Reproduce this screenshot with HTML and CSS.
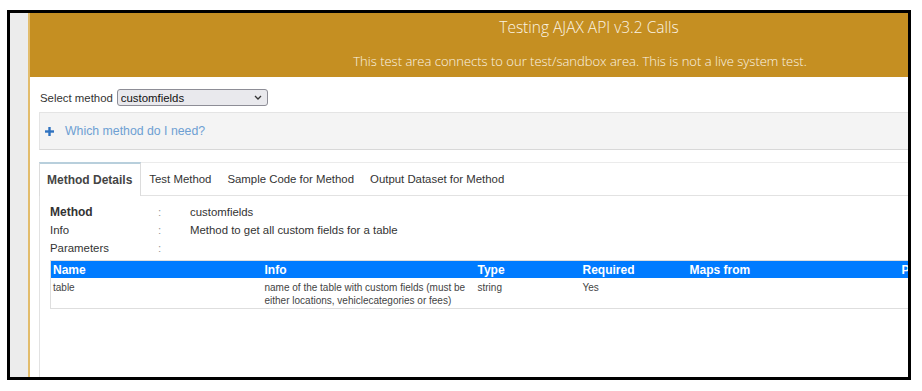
FILE: index.html
```html
<!DOCTYPE html>
<html lang="en">
<head>
    <meta charset="UTF-8">
    <title>Testing AJAX API v3.2 Calls</title>
    <link rel="stylesheet" href="styles.css">
</head>
<body>
    <div class="frame">
        <div class="side-strip"></div>
        <div class="main">
            <header class="banner">
                <h1>Testing AJAX API v3.2 Calls</h1>
                <p>This test area connects to our test/sandbox area. This is not a live system test.</p>
            </header>

            <div class="content">
                <div class="method-select">
                    <label for="method">Select method</label>
                    <div class="select-wrap">
                        <select id="method">
                            <option>customfields</option>
                        </select>
                        <svg class="chevron" width="8" height="5" viewBox="0 0 8 5">
                            <path d="M1 1 L4 4 L7 1" fill="none" stroke="#333" stroke-width="1.3"/>
                        </svg>
                    </div>
                </div>

                <div class="help-panel">
                    <svg class="plus" width="9" height="9" viewBox="0 0 9 9">
                        <rect x="0" y="3.3" width="9" height="2.4" fill="#2f73c0"/>
                        <rect x="3.3" y="0" width="2.4" height="9" fill="#2f73c0"/>
                    </svg>
                    <span>Which method do I need?</span>
                </div>

                <ul class="tabs">
                    <li class="tab active">Method Details</li>
                    <li class="tab">Test Method</li>
                    <li class="tab">Sample Code for Method</li>
                    <li class="tab">Output Dataset for Method</li>
                </ul>

                <div class="tab-pane">
                    <div class="detail-row">
                        <span class="detail-label strong">Method</span>
                        <span class="detail-colon">:</span>
                        <span>customfields</span>
                    </div>
                    <div class="detail-row">
                        <span class="detail-label">Info</span>
                        <span class="detail-colon">:</span>
                        <span>Method to get all custom fields for a table</span>
                    </div>
                    <div class="detail-row">
                        <span class="detail-label">Parameters</span>
                        <span class="detail-colon">:</span>
                        <span></span>
                    </div>

                    <table class="params">
                        <colgroup>
                            <col class="col-name">
                            <col class="col-info">
                            <col class="col-type">
                            <col class="col-req">
                            <col class="col-maps">
                            <col class="col-values">
                        </colgroup>
                        <thead>
                            <tr>
                                <th>Name</th>
                                <th>Info</th>
                                <th>Type</th>
                                <th>Required</th>
                                <th>Maps from</th>
                                <th>Possible values</th>
                            </tr>
                        </thead>
                        <tbody>
                            <tr>
                                <td>table</td>
                                <td>name of the table with custom fields (must be either locations, vehiclecategories or fees)</td>
                                <td>string</td>
                                <td>Yes</td>
                                <td></td>
                                <td></td>
                            </tr>
                        </tbody>
                    </table>
                </div>
            </div>
        </div>
    </div>
</body>
</html>
```

FILE: styles.css
```css
body {
    margin: 0;
    padding: 10px 7px;
    background: #fff;
    font-family: "Liberation Sans", Arial, sans-serif;
    color: #333;
}
.frame {
    display: flex;
    width: 898px;
    height: 364px;
    border: 3px solid #000;
    overflow: hidden;
    background: #fff;
}
.side-strip {
    flex: 0 0 18px;
    background: #ececec;
}
.main {
    flex: 0 0 1118px;
    border-left: 2px solid #e2bc6c;
}
.banner {
    height: 64px;
    box-sizing: border-box;
    background: #c58f22;
    color: #fbf4e4;
    text-align: center;
    font-family: "Open Sans", sans-serif;
    font-weight: 300;
    padding-bottom: 7px;
}
.banner h1 {
    margin: 0;
    font-size: 15.5px;
    font-weight: 300;
    line-height: 28px;
}
.banner p {
    margin: 11px 0 0;
    font-size: 13px;
    line-height: 18px;
    padding-right: 18px;
}
.content {
    padding: 12px 0 0 9px;
}
.method-select {
    display: flex;
    align-items: center;
    gap: 4px;
    height: 17px;
    padding-left: 1px;
    font-size: 11.4px;
}
.select-wrap {
    position: relative;
}
.select-wrap select {
    appearance: none;
    width: 151px;
    height: 17px;
    padding: 0 0 0 3px;
    border: 1px solid #8d8d96;
    border-radius: 3px;
    background: #e9e9ed;
    font-family: "Liberation Sans", Arial, sans-serif;
    font-size: 11.4px;
    color: #111;
}
.chevron {
    position: absolute;
    right: 6px;
    top: 6px;
}
.help-panel {
    display: flex;
    align-items: center;
    gap: 11px;
    margin-top: 6px;
    height: 36px;
    padding-left: 5px;
    background: #f4f4f4;
    border: 1px solid #e4e4e4;
    border-bottom-color: #d8d8d8;
    color: #6ea0d3;
    font-size: 12.3px;
}
.tabs {
    display: flex;
    list-style: none;
    margin: 12px 0 0;
    padding: 0;
    height: 32px;
    border-top: 1px solid #ebebeb;
    border-bottom: 1px solid #e2e2e2;
    font-size: 11.4px;
}
.tab {
    display: flex;
    align-items: center;
    padding: 0 8px;
    color: #333;
}
.tab.active {
    margin: -1px 0 -1px;
    padding: 0 8px 0 7px;
    border: 1px solid #dcdcdc;
    border-top: 2px solid #b8cfdc;
    border-bottom: none;
    background: #fff;
    font-size: 12px;
    font-weight: bold;
    color: #444;
}
.tab-pane {
    height: 200px;
    padding: 7px 0 0 10px;
    border-left: 1px solid #e2e2e2;
    font-size: 11.4px;
}
.detail-row {
    display: flex;
    height: 18px;
    line-height: 18px;
}
.detail-label {
    width: 108px;
}
.strong {
    font-weight: bold;
    font-size: 12px;
}
.detail-colon {
    width: 32px;
    color: #999;
}
.params {
    margin-top: 3px;
    width: 957px;
    table-layout: fixed;
    border-collapse: collapse;
    border: 1px solid #dedede;
}
.col-name { width: 212px; }
.col-info { width: 213px; }
.col-type { width: 105px; }
.col-req { width: 107px; }
.col-maps { width: 212px; }
.col-values { width: 108px; }
.params th {
    height: 17px;
    padding: 0 2px;
    background: #007bff;
    color: #fff;
    font-size: 12px;
    text-align: left;
    white-space: nowrap;
    overflow: hidden;
}
.params td {
    padding: 3px 2px 1px;
    font-size: 10px;
    line-height: 13px;
    vertical-align: top;
    color: #444;
}
```
